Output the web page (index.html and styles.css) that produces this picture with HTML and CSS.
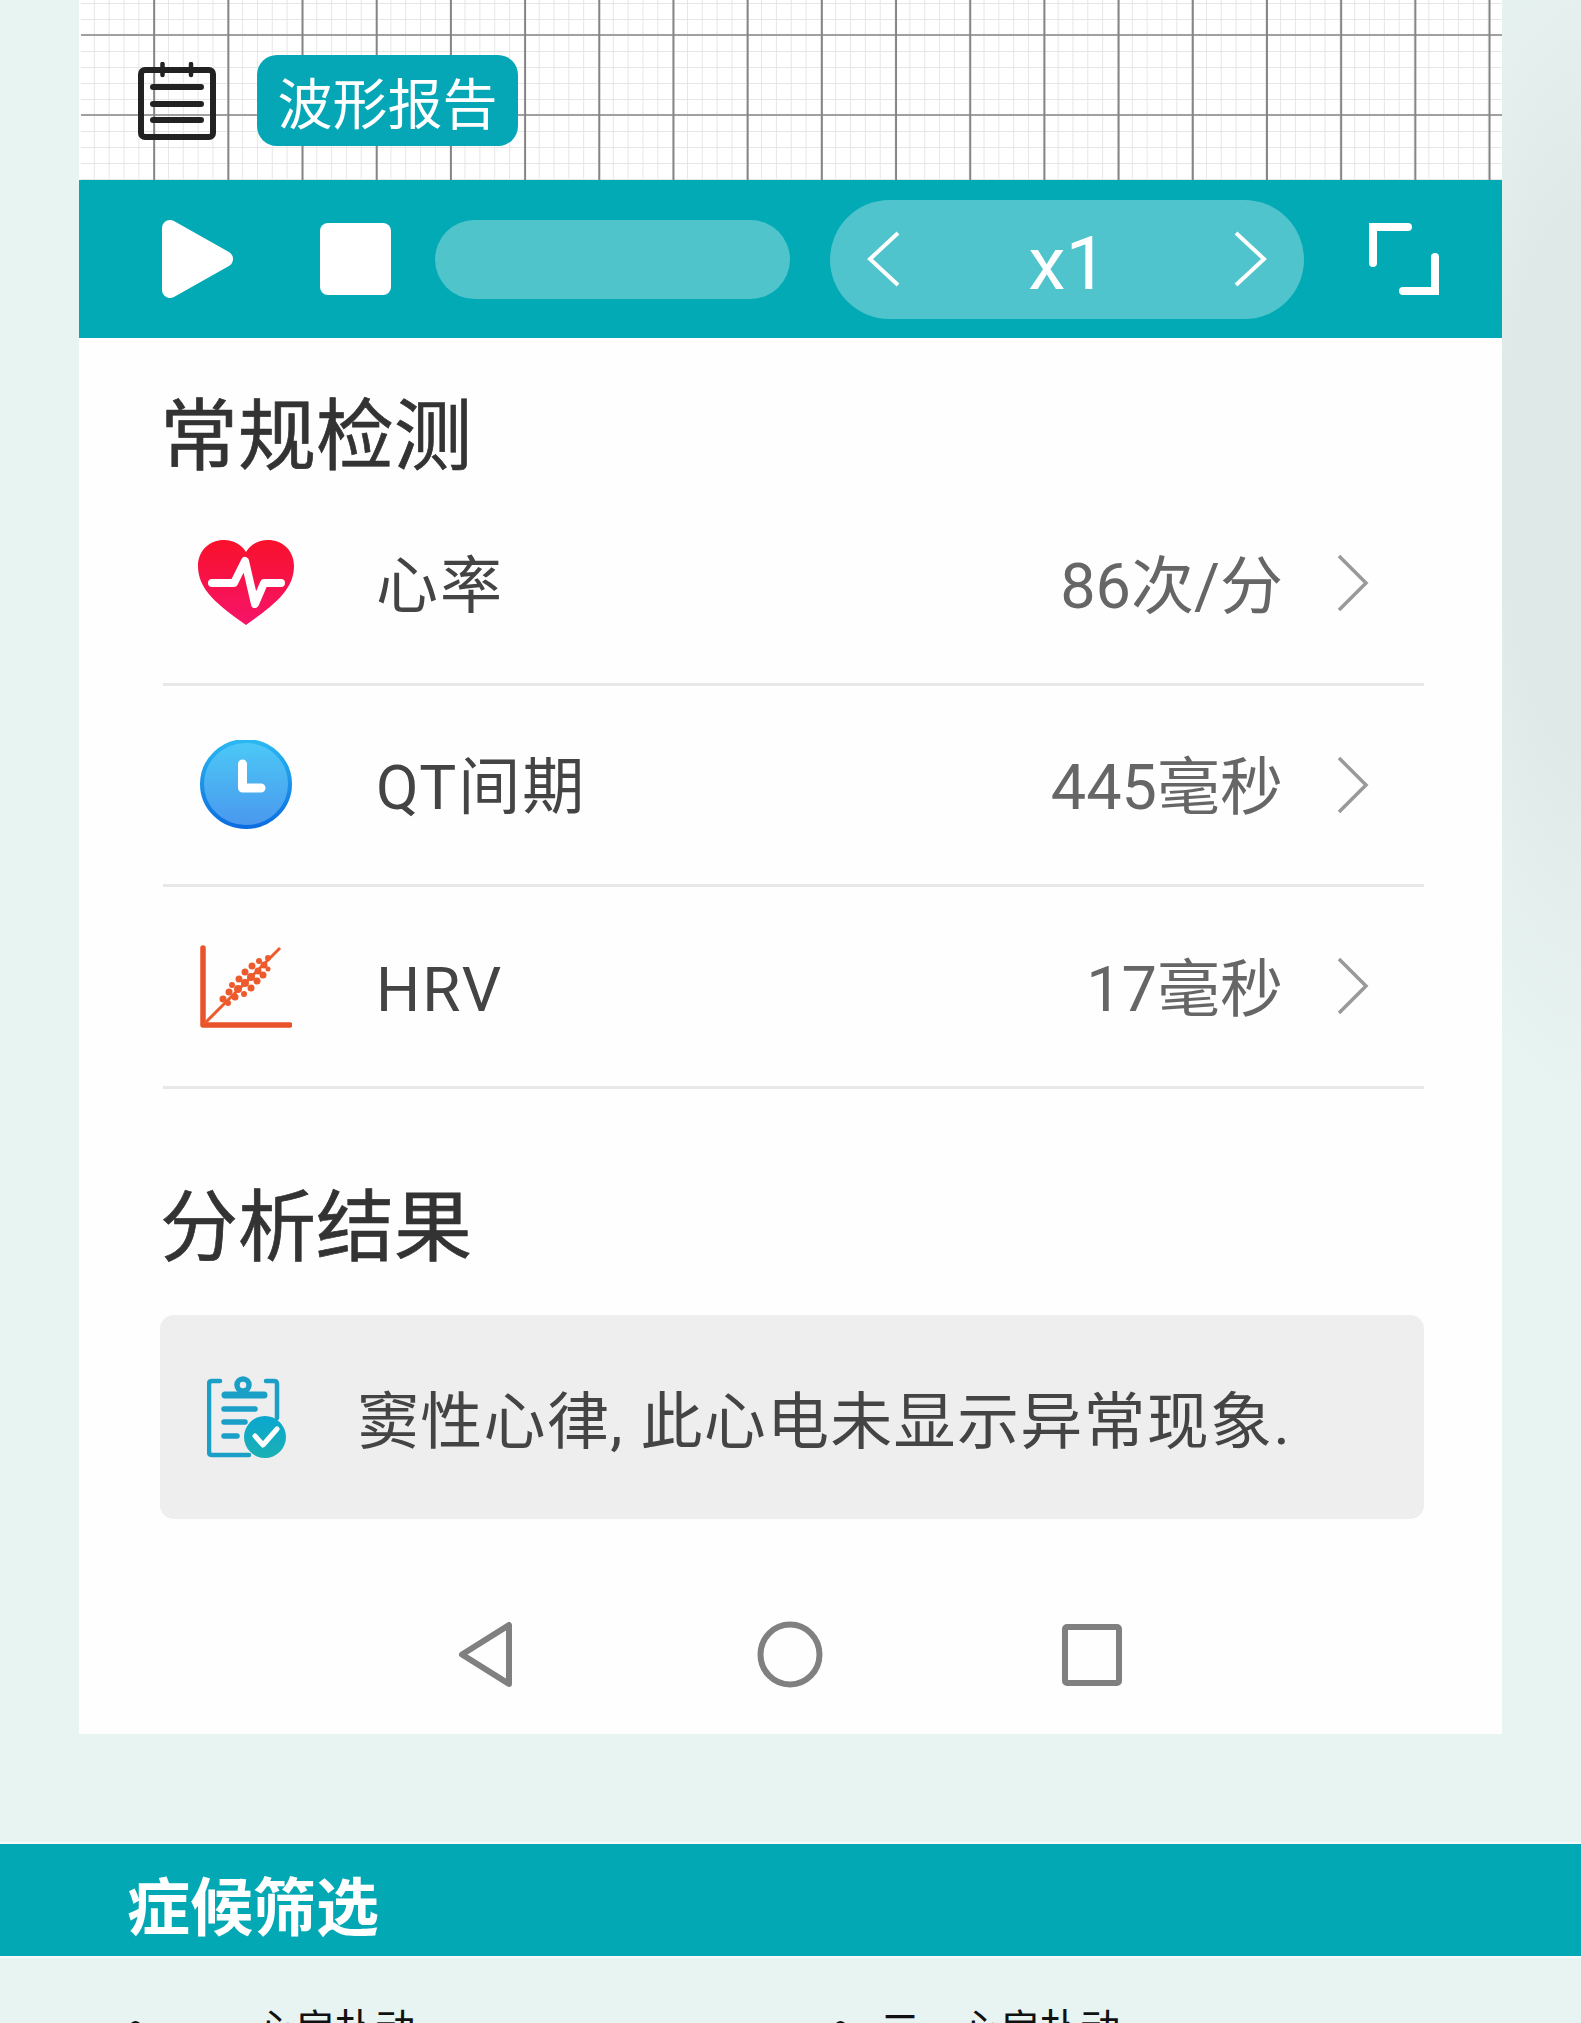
FILE: index.html
```html
<!DOCTYPE html>
<html lang="zh-CN">
<head>
  <meta charset="UTF-8">
  <title>心电报告</title>
  <link rel="stylesheet" href="styles.css">
</head>
<body>
  <div class="phone">
    <div class="graph">
      <svg class="note-icon" viewBox="0 0 78 78" fill="none" stroke="#222" stroke-width="6">
        <rect x="3" y="8" width="72" height="67" rx="4"/>
        <path d="M24.5 2V13M53 2V13" stroke-width="4.5" stroke-linecap="round"/>
        <path d="M15 25H63M15 42H63M15 58H63" stroke-linecap="round"/>
      </svg>
      <div class="report-btn">波形报告</div>
    </div>

    <div class="controls">
      <svg class="play" viewBox="0 0 73 80"><path d="M9 9L64 40L9 71Z" fill="#fff" stroke="#fff" stroke-width="16" stroke-linejoin="round"/></svg>
      <div class="stop"></div>
      <div class="progress"></div>
      <div class="speed">
        <svg class="speed-arrow" viewBox="0 0 33 56" fill="none" stroke="#fff" stroke-width="4"><path d="M31 2L3 28L31 54"/></svg>
        <span class="speed-text">x1</span>
        <svg class="speed-arrow" viewBox="0 0 33 56" fill="none" stroke="#fff" stroke-width="4"><path d="M2 2L30 28L2 54"/></svg>
      </div>
      <svg class="fullscreen" viewBox="0 0 72 72" fill="none" stroke="#fff" stroke-width="8" stroke-linecap="round">
        <path d="M40 4H5V40"/>
        <path d="M67 34V68H35"/>
      </svg>
    </div>

    <div class="content">
      <h2 class="section-title">常规检测</h2>

      <div class="row">
        <div class="row-icon">
          <svg width="96" height="86" viewBox="0 0 96 86">
            <defs>
              <linearGradient id="heartFill" x1="0" y1="0" x2="0" y2="1">
                <stop offset="0" stop-color="#f9112b"/>
                <stop offset="1" stop-color="#f5146a"/>
              </linearGradient>
            </defs>
            <path d="M48 85C20 65 0 50 0 26C0 10 12 0 26 0C36 0 44 5 48 12C52 5 60 0 70 0C84 0 96 10 96 26C96 50 76 65 48 85Z" fill="url(#heartFill)"/>
            <path d="M14 43H36L47 21L57 64L66 43H83" fill="none" stroke="#fff" stroke-width="8" stroke-linecap="round" stroke-linejoin="round"/>
          </svg>
        </div>
        <span class="row-name">心率</span>
        <span class="row-value">86次/分</span>
        <svg class="row-arrow" viewBox="0 0 32 58" fill="none" stroke="#999" stroke-width="3.5"><path d="M2 2L29 29L2 56"/></svg>
      </div>

      <div class="row">
        <div class="row-icon">
          <svg width="94" height="90" viewBox="0 0 94 90">
            <defs>
              <linearGradient id="clockFill" x1="0" y1="0" x2="0" y2="1">
                <stop offset="0" stop-color="#4cc9f6"/>
                <stop offset="1" stop-color="#4a97ee"/>
              </linearGradient>
              <linearGradient id="clockEdge" x1="0" y1="0" x2="0" y2="1">
                <stop offset="0" stop-color="#2ab8f2"/>
                <stop offset="1" stop-color="#0b6de0"/>
              </linearGradient>
            </defs>
            <ellipse cx="48" cy="44" rx="44" ry="43" fill="url(#clockFill)" stroke="url(#clockEdge)" stroke-width="4"/>
            <path d="M44.5 24V48H63" fill="none" stroke="#fff" stroke-width="9" stroke-linecap="round" stroke-linejoin="round"/>
          </svg>
        </div>
        <span class="row-name">QT间期</span>
        <span class="row-value">445毫秒</span>
        <svg class="row-arrow" viewBox="0 0 32 58" fill="none" stroke="#999" stroke-width="3.5"><path d="M2 2L29 29L2 56"/></svg>
      </div>

      <div class="row">
        <div class="row-icon">
          <svg width="94" height="85" viewBox="0 0 94 85" fill="#ed5a2c">
            <path d="M5 4V81H92" fill="none" stroke="#e8532a" stroke-width="5.5" stroke-linecap="round" stroke-linejoin="round"/>
            <path d="M6 80L82 4" fill="none" stroke="#ed5a2c" stroke-width="3"/>
            <circle cx="25" cy="55" r="3.5"/><circle cx="30" cy="59" r="3"/><circle cx="31" cy="48" r="3.5"/>
            <circle cx="37" cy="53" r="3.5"/><circle cx="34" cy="41" r="3"/><circle cx="40" cy="45" r="4"/>
            <circle cx="46" cy="50" r="3"/><circle cx="41" cy="35" r="3.5"/><circle cx="47" cy="39" r="4"/>
            <circle cx="53" cy="44" r="3.5"/><circle cx="47" cy="28" r="3.5"/><circle cx="53" cy="33" r="4"/>
            <circle cx="59" cy="37" r="3.5"/><circle cx="54" cy="22" r="3.5"/><circle cx="60" cy="27" r="3.5"/>
            <circle cx="65" cy="31" r="3.5"/><circle cx="61" cy="17" r="3"/><circle cx="66" cy="21" r="3.5"/>
            <circle cx="70" cy="25" r="2.5"/><circle cx="70" cy="14" r="3"/>
          </svg>
        </div>
        <span class="row-name">HRV</span>
        <span class="row-value">17毫秒</span>
        <svg class="row-arrow" viewBox="0 0 32 58" fill="none" stroke="#999" stroke-width="3.5"><path d="M2 2L29 29L2 56"/></svg>
      </div>

      <h2 class="section-title result-title">分析结果</h2>

      <div class="result">
        <svg class="result-icon" viewBox="0 0 80 82" fill="none">
          <defs>
            <linearGradient id="checkFill" x1="0" y1="0" x2="0" y2="1">
              <stop offset="0" stop-color="#0aa7cf"/>
              <stop offset="1" stop-color="#1bb0b4"/>
            </linearGradient>
          </defs>
          <path d="M13 5H5Q2 5 2 8V76Q2 79 5 79H42M59 5H67Q70 5 70 8V42" stroke="#1a9fc6" stroke-width="4.5" stroke-linecap="round"/>
          <circle cx="36" cy="9" r="6" stroke="#1a9fc6" stroke-width="5.5"/>
          <path d="M18 19H57" stroke="#1a9fc6" stroke-width="7" stroke-linecap="round"/>
          <path d="M17 33H48M17 46H38M17 60H30" stroke="#1a9fc6" stroke-width="5.5" stroke-linecap="round"/>
          <circle cx="58" cy="61" r="21" fill="url(#checkFill)"/>
          <path d="M48 60L56 69L70 53" stroke="#fff" stroke-width="5" stroke-linecap="round" stroke-linejoin="round"/>
        </svg>
        <span class="result-text">窦性心律, 此心电未显示异常现象.</span>
      </div>

      <div class="nav">
        <svg class="nav-back" viewBox="0 0 55 67" fill="none" stroke="#808080" stroke-width="6" stroke-linejoin="round"><path d="M51 4V63L4 33.5Z"/></svg>
        <svg class="nav-home" viewBox="0 0 66 67" fill="none" stroke="#808080" stroke-width="6"><ellipse cx="33" cy="33.5" rx="29.5" ry="30"/></svg>
        <svg class="nav-recent" viewBox="0 0 60 62" fill="none" stroke="#808080" stroke-width="6"><rect x="3" y="3" width="54" height="56" rx="2"/></svg>
      </div>
    </div>
  </div>

  <div class="band">症候筛选</div>
  <ul class="symptoms">
    <li>一、心房扑动</li>
    <li>二、心房扑动</li>
  </ul>
</body>
</html>
```

FILE: styles.css
```css
html, body {
  margin: 0;
  height: 2023px;
  overflow: hidden;
}

body {
  font-family: Roboto, "Noto Sans CJK SC", sans-serif;
  background:
    radial-gradient(ellipse 180px 620px at 100% 480px, #dfeae8 40%, rgba(223, 234, 232, 0) 100%),
    #e8f4f2;
}

.phone {
  margin-left: 79px;
  width: 1423px;
  height: 1734px;
  background: #fefefe;
  display: flex;
  flex-direction: column;
}

/* ecg paper */
.graph {
  height: 180px;
  box-sizing: border-box;
  border-left: 2px solid #fff;
  padding: 55px 0 0 57px;
  display: flex;
  align-items: flex-start;
  background-color: #fff;
  background-image:
    linear-gradient(90deg, #858585 2px, transparent 2px),
    linear-gradient(0deg, #a0a0a0 2px, transparent 2px),
    linear-gradient(90deg, #e6e6e6 1px, transparent 1px),
    linear-gradient(0deg, #e6e6e6 1px, transparent 1px);
  background-size: 74.2px 100%, 100% 80px, 14.84px 100%, 100% 16px;
  background-position: 0 0, 0 36px, 0 0, 0 4px;
  background-origin: border-box;
  background-clip: padding-box;
}

.note-icon {
  width: 78px;
  height: 78px;
  margin-top: 7px;
}

.report-btn {
  margin-left: 41px;
  width: 261px;
  height: 91px;
  border-radius: 20px;
  background: #05a6b6;
  color: #fff;
  font-size: 55px;
  line-height: 100px;
  text-align: center;
}

.controls {
  height: 158px;
  background: #02aab6;
  display: flex;
  align-items: center;
  padding-left: 82px;
}

.play {
  width: 73px;
  height: 80px;
}

.stop {
  margin-left: 86px;
  width: 71px;
  height: 72px;
  border-radius: 8px;
  background: #fff;
}

.progress {
  margin-left: 44px;
  width: 355px;
  height: 79px;
  border-radius: 40px;
  background: #4fc5cb;
}

.speed {
  margin-left: 40px;
  width: 474px;
  height: 119px;
  box-sizing: border-box;
  padding: 0 37px;
  border-radius: 60px;
  background: #4fc4cc;
  display: flex;
  align-items: center;
  justify-content: space-between;
}

.speed-arrow {
  width: 33px;
  height: 56px;
}

.speed-text {
  color: #fff;
  font-size: 75px;
  line-height: 87px;
  padding-top: 8px;
  margin-left: 2px;
}

.fullscreen {
  margin-left: 64px;
  width: 72px;
  height: 72px;
}

.content {
  flex: 1;
  padding: 50px 78px 0 84px;
  display: flex;
  flex-direction: column;
}

.section-title {
  margin: 0 0 0 -3px;
  height: 96px;
  font-size: 78px;
  font-weight: 400;
  line-height: 100px;
  color: #333;
  -webkit-text-stroke: 0.7px #333;
}

.row {
  height: 201.5px;
  box-sizing: border-box;
  border-bottom: 3px solid #e8e8e8;
  display: flex;
  align-items: center;
}

.row-icon {
  width: 213px;
  padding-left: 35px;
  box-sizing: border-box;
  display: flex;
}

.row-name {
  flex: 1;
  margin-top: 7px;
  font-size: 62px;
  letter-spacing: 2px;
  line-height: 84px;
  color: #444;
}

.row-value {
  margin-top: 7px;
  font-size: 63px;
  line-height: 84px;
  color: #666;
}

.row-arrow {
  margin: 0 55px 0 54px;
  width: 32px;
  height: 58px;
}

.result-title {
  margin-top: 90.5px;
}

.result {
  margin: 40px 0 0 -3px;
  height: 204px;
  box-sizing: border-box;
  padding-left: 47px;
  border-radius: 14px;
  background: #efeeef;
  display: flex;
  align-items: center;
}

.result-icon {
  width: 80px;
  height: 82px;
}

.result-text {
  margin-left: 70px;
  font-size: 62px;
  letter-spacing: 1.3px;
  color: #444;
  white-space: nowrap;
}

.nav {
  padding: 102px 0 0 295px;
  display: flex;
  align-items: center;
}

.nav-back {
  width: 55px;
  height: 67px;
}

.nav-home {
  margin-left: 244px;
  width: 66px;
  height: 67px;
}

.nav-recent {
  margin-left: 239px;
  width: 60px;
  height: 62px;
}

.band {
  margin-top: 110px;
  height: 112px;
  padding-left: 127px;
  background: #02a9b5;
  box-shadow: 0 0 0 2px rgba(255, 255, 255, 0.6);
  color: #fff;
  font-size: 63px;
  font-weight: 700;
  line-height: 130px;
}

.symptoms {
  list-style: none;
  margin: 0;
  padding: 46px 0 0 130px;
  display: grid;
  grid-template-columns: 705px 705px;
}

.symptoms li {
  display: flex;
  align-items: flex-start;
  font-size: 40px;
  line-height: 56px;
  color: #111;
}

.symptoms li::before {
  content: "";
  width: 11px;
  height: 11px;
  margin: 19px 34px 0 0;
  border-radius: 50%;
  background: #111;
}
```
